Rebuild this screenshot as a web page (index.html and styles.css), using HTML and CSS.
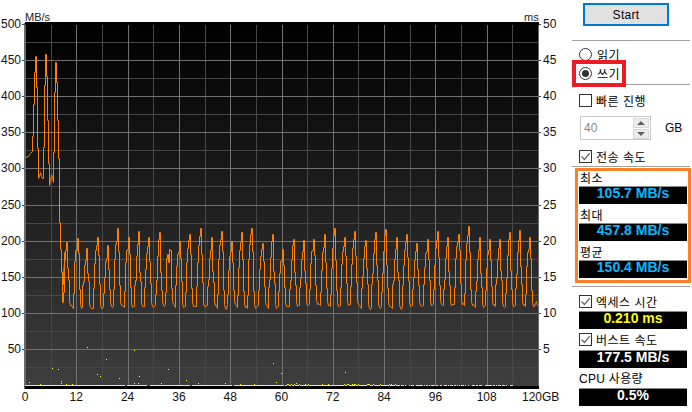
FILE: index.html
```html
<!DOCTYPE html>
<html lang="ko">
<head>
<meta charset="utf-8">
<title>Benchmark</title>
<link rel="stylesheet" href="styles.css">
</head>
<body>
<main class="app">
  <svg class="chart" width="562" height="412" viewBox="0 0 562 412" xmlns="http://www.w3.org/2000/svg">
    <defs>
      <linearGradient id="plotBg" x1="0" y1="0" x2="0" y2="1">
        <stop offset="0" stop-color="#000"/>
        <stop offset="1" stop-color="#3e3e3e"/>
      </linearGradient>
    </defs>
    <rect x="25" y="23" width="514" height="364" fill="url(#plotBg)"/>
    <g id="grid" class="crisp"></g>
    <rect x="25" y="22" width="514" height="3" fill="#000"/>
    <rect x="25" y="386" width="514" height="3" fill="#000"/>
    <g id="dots" class="crisp"></g>
    <polyline id="trace" class="trace" points=""/>
    <text class="unit" x="25" y="21">MB/s</text>
    <text class="unit" x="524" y="21">ms</text>
    <g id="labels"></g>
  </svg>
  <aside class="side">
    <button class="start" type="button">Start</button>
    <div class="rule rule-first"></div>
    <div class="row row-radio"><span class="radio"></span><span class="row-text">읽기</span></div>
    <div class="row row-radio"><span class="radio radio-on"></span><span class="row-text">쓰기</span></div>
    <div class="rule rule-second"></div>
    <div class="row row-quick"><span class="check"></span><span class="row-text">빠른 진행</span></div>
    <div class="size-row">
      <div class="spin">
        <span class="spin-value">40</span>
        <span class="spin-buttons">
          <span class="spin-btn"><svg width="8" height="4" viewBox="0 0 8 4"><path d="M4 0 8 4H0Z" fill="#606060"/></svg></span>
          <span class="spin-btn"><svg width="8" height="4" viewBox="0 0 8 4"><path d="M0 0H8L4 4Z" fill="#606060"/></svg></span>
        </span>
      </div>
      <span class="gb">GB</span>
    </div>
    <div class="row row-speed">
      <span class="check check-on"><svg width="11" height="11" viewBox="0 0 11 11"><path d="M1.5 5.5 4.5 8.5 9.8 2.2" fill="none" stroke="#666" stroke-width="1.3"/></svg></span>
      <span class="row-text">전송 속도</span>
    </div>
    <div class="rule"></div>
    <div class="label">최소</div>
    <div class="value value-cyan">105.7 MB/s</div>
    <div class="label">최대</div>
    <div class="value value-cyan">457.8 MB/s</div>
    <div class="label">평균</div>
    <div class="value value-cyan">150.4 MB/s</div>
    <div class="rule rule-third"></div>
    <div class="row row-access">
      <span class="check check-on"><svg width="11" height="11" viewBox="0 0 11 11"><path d="M1.5 5.5 4.5 8.5 9.8 2.2" fill="none" stroke="#666" stroke-width="1.3"/></svg></span>
      <span class="row-text">엑세스 시간</span>
    </div>
    <div class="value value-yellow">0.210 ms</div>
    <div class="row row-burst">
      <span class="check check-on"><svg width="11" height="11" viewBox="0 0 11 11"><path d="M1.5 5.5 4.5 8.5 9.8 2.2" fill="none" stroke="#666" stroke-width="1.3"/></svg></span>
      <span class="row-text">버스트 속도</span>
    </div>
    <div class="value value-white">177.5 MB/s</div>
    <div class="label label-cpu">CPU 사용량</div>
    <div class="value value-white">0.5%</div>
    <div class="mark mark-red"></div>
    <div class="mark mark-orange"></div>
  </aside>
</main>
<script src="chart.js"></script>
</body>
</html>
```
FILE: styles.css
```css
* { box-sizing: border-box; }
html, body { margin: 0; padding: 0; background: #fff; }
body {
  font-family: "Liberation Sans", "Noto Sans CJK KR", sans-serif;
  font-size: 12px;
  color: #000;
  overflow: hidden;
}
.app { display: flex; width: 692px; height: 412px; }
.chart { display: block; flex: none; }
.crisp { shape-rendering: crispEdges; }
.trace {
  fill: none;
  stroke: #ff7f00;
  stroke-width: 1;
  stroke-linejoin: miter;
  transform: translate(.5px, .5px);
}
.chart text {
  font-family: "Liberation Sans", sans-serif;
  font-size: 12px;
  fill: #111;
}
.chart .unit { font-size: 11px; fill: #222; }

.side { position: relative; flex: none; width: 130px; height: 412px; padding-left: 10px; }
.start {
  display: block;
  width: 86px;
  height: 23px;
  margin: 3px 0 0 11px;
  padding: 0;
  border: 2px solid #0078d7;
  background: #e1e1e1;
  font: 12px "Liberation Sans", sans-serif;
  letter-spacing: .3px;
  color: #000;
}
.rule { width: 118px; height: 1px; background: #a0a0a0; }
.rule-first { margin-top: 14px; margin-bottom: 4px; }
.rule-second { margin-top: 1px; }
.rule-third { margin-top: 8px; }

.row { display: flex; align-items: center; line-height: 1; }
.row-text { padding-top: 2px; letter-spacing: .5px; }
.row-radio { height: 19px; margin-left: 7px; gap: 5px; }
.row-quick { height: 19px; margin: 6px 0 0 7px; gap: 4px; }
.row-speed { height: 19px; margin: 7px 0 0 7px; gap: 4px; }
.row-access { height: 19px; margin: 5px 0 0 7px; gap: 4px; }
.row-burst { height: 21px; margin-left: 7px; gap: 4px; }

.radio {
  position: relative;
  flex: none;
  width: 13px;
  height: 13px;
  border: 1px solid #333;
  border-radius: 50%;
  background: #fff;
}
.radio-on::after {
  content: "";
  position: absolute;
  left: 2px;
  top: 2px;
  width: 7px;
  height: 7px;
  border-radius: 50%;
  background: #333;
}
.check {
  display: flex;
  align-items: center;
  justify-content: center;
  flex: none;
  width: 13px;
  height: 13px;
  border: 1px solid #333;
  background: #fff;
}
.size-row { display: flex; align-items: center; height: 24px; margin: 6px 0 0 8px; }
.spin {
  display: flex;
  align-items: center;
  justify-content: space-between;
  width: 71px;
  height: 24px;
  padding: 0 1px 0 3px;
  border: 1px solid #c8c8c8;
  color: #8a8a8a;
}
.spin-value { font-size: 12px; }
.spin-buttons { display: flex; flex-direction: column; gap: 1px; }
.spin-btn {
  display: flex;
  align-items: center;
  justify-content: center;
  width: 16px;
  height: 10px;
  background: #ececec;
  border: 1px solid #d8d8d8;
}
.gb { margin-left: 14px; }

.label { height: 19px; margin-left: 8px; padding-top: 3px; line-height: 19px; letter-spacing: .5px; }
.label-cpu { height: 20px; margin-left: 7px; padding-top: 2px; line-height: 18px; letter-spacing: .3px; }
.value {
  width: 108px;
  height: 18px;
  margin-left: 7px;
  border-top: 1px solid #8a8a8a;
  background: #000;
  font: bold 14px/13px "Liberation Sans", sans-serif;
  text-align: center;
}
.value-cyan { color: #08b8ff; }
.value-yellow { color: #ffff00; }
.value-white { color: #fff; }

.mark { position: absolute; pointer-events: none; }
.mark-red { left: 10px; top: 60px; width: 54px; height: 27px; border: 4px solid #ed1c24; }
.mark-orange { left: 13px; top: 168px; width: 116px; height: 115px; border: 3px solid #ff7f27; }
```
FILE: chart.js
```js
(function () {
  var NS = 'http://www.w3.org/2000/svg';
  function yOf(v) { return 385 - v * 0.722; }
  function xOf(g) { return 25 + g * 4.275; }
  function add(parent, tag, attrs, text) {
    var el = document.createElementNS(NS, tag);
    for (var k in attrs) el.setAttribute(k, attrs[k]);
    if (text !== undefined) el.textContent = text;
    parent.appendChild(el);
    return el;
  }

  var grid = document.getElementById('grid');
  var labels = document.getElementById('labels');
  var MINOR = '#474747', MAJOR = '#727272';
  var v, g, y, x;

  for (v = 25; v <= 475; v += 50) {
    y = Math.round(yOf(v));
    add(grid, 'rect', { x: 25, y: y, width: 514, height: 1, fill: MINOR });
  }
  for (g = 6; g < 120; g += 12) {
    x = Math.round(xOf(g));
    add(grid, 'rect', { x: x, y: 23, width: 1, height: 364, fill: MINOR });
  }
  for (v = 50; v <= 450; v += 50) {
    y = Math.round(yOf(v));
    add(grid, 'rect', { x: 25, y: y, width: 514, height: 1, fill: MAJOR });
  }
  for (g = 12; g < 120; g += 12) {
    x = Math.round(xOf(g));
    add(grid, 'rect', { x: x, y: 23, width: 1, height: 364, fill: MAJOR });
  }
  add(grid, 'rect', { x: 24, y: 23, width: 2, height: 366, fill: '#6a6a6a' });
  add(grid, 'rect', { x: 538, y: 23, width: 1, height: 366, fill: '#6a6a6a' });

  for (v = 50; v <= 500; v += 50) {
    y = Math.round(yOf(v));
    add(grid, 'rect', { x: 22, y: y, width: 2, height: 1, fill: '#444' });
    add(grid, 'rect', { x: 539, y: y, width: 2, height: 1, fill: '#444' });
    add(labels, 'text', { x: 21, y: y + 4, 'text-anchor': 'end' }, String(v));
    add(labels, 'text', { x: 543, y: y + 4 }, String(v / 10));
  }
  for (g = 0; g < 120; g += 12) {
    add(labels, 'text', { x: xOf(g), y: 401, 'text-anchor': 'middle' }, String(g));
  }
  add(labels, 'text', { x: 522, y: 401 }, '120GB');

  /* Opening section of the write curve, read off the reference. */
  var pts = [
    [25,157],[28,156],[30,153],[32,151],[32,136],[33,136],[33,104],[34,104],[34,72],[35,72],[35,56],[36,56],[36,87],[37,87],
    [37,148],[38,148],[38,178],[39,176],[40,172],[41,176],[42,178],[43,178],[43,147],[44,147],[44,85],[45,85],[45,54],[46,54],
    [46,76],[47,76],[47,120],[48,120],[48,163],[49,163],[49,185],[50,180],[51,174],[52,177],[53,182],[53,152],[54,152],
    [54,92],[55,92],[55,62],[56,62],[56,82],[57,82],[57,120],[58,120],[58,158],[59,158],[59,222],[60,222],
    [60,249],[61,249],[61,272],[62,272],[62,302],[63,302],[63,292],[64,292],[64,252],[65,252]
  ];

  var peaks = [
    [66,242],[77,238],[86,248],[97,237],[107,245],[117,228],[128,237],[138,231],[148,237],[159,232],[169,249],
    [179,241],[189,234],[200,228],[211,237],[221,231],[231,241],[241,232],[251,228],[262,243],[272,234],[282,249],
    [293,239],[303,240],[313,239],[324,234],[334,228],[344,237],[354,231],[365,240],[375,232],[385,229],[396,237],[406,234],
    [416,243],[427,239],[437,231],[447,237],[458,234],[468,226],[479,237],[489,239],[499,239],[509,232],[519,230],[529,237]
  ];
  var seed = 7;
  function rnd(n) { seed = (seed * 1103515 + 12345) % 65536; return (seed >> 4) % n; }

  peaks.forEach(function (p, i) {
    var px = p[0], top = p[1];
    var base = 304 + rnd(5);
    var mid = 258 + rnd(24);
    var low = 284 + rnd(12);
    var rise = Math.round((top + mid) / 2);
    var shoulder = top + 6 + rnd(8);
    if (i > 0) pts.push([px - 4, base]);
    pts.push(
      [px - 4, low], [px - 3, low], [px - 3, mid], [px - 2, mid],
      [px - 2, rise], [px - 1, rise], [px - 1, shoulder], [px, shoulder], [px, top], [px + 1, top],
      [px + 1, mid - 8], [px + 2, mid - 8], [px + 2, low - 4], [px + 3, low - 4],
      [px + 3, base - 4], [px + 4, base]
    );
    pts.push([px + 5, base + rnd(3) - 1]);
  });
  pts.push([535, 303], [536, 301], [537, 305]);

  document.getElementById('trace').setAttribute('points', pts.map(function (p) { return p.join(','); }).join(' '));

  /* Access time scatter. */
  var dots = document.getElementById('dots');
  var YEL = '#ffff00';
  function dot(x, y, w) { add(dots, 'rect', { x: x, y: y, width: w || 1, height: 1, fill: YEL }); }
  [[29,382],[52,368],[58,369],[61,381],[61,383],[87,347],[97,374],[100,376],[106,359],[119,378],[134,350],[134,383],
   [139,376],[138,383],[168,369],[186,380],[198,383],[161,383],[225,383],[273,363],[281,373],[345,372],[276,382],
   [254,384],[296,383],[240,384],[66,384],[40,384],[72,384]].forEach(function (d) { dot(d[0], d[1]); });

  dot(25, 385, 100);
  dot(127, 385, 20);
  dot(150, 385, 40);
  dot(192, 385, 40);
  dot(234, 385, 50);
  for (x = 285; x < 515; x++) {
    var gap = x < 400 ? 1 : 2;
    var n = rnd(5);
    if (n >= gap) dot(x, 385, n > 3 && x < 400 ? 2 : 1);
    if (n === 0 && x < 400) dot(x, 384);
  }
})();
```
